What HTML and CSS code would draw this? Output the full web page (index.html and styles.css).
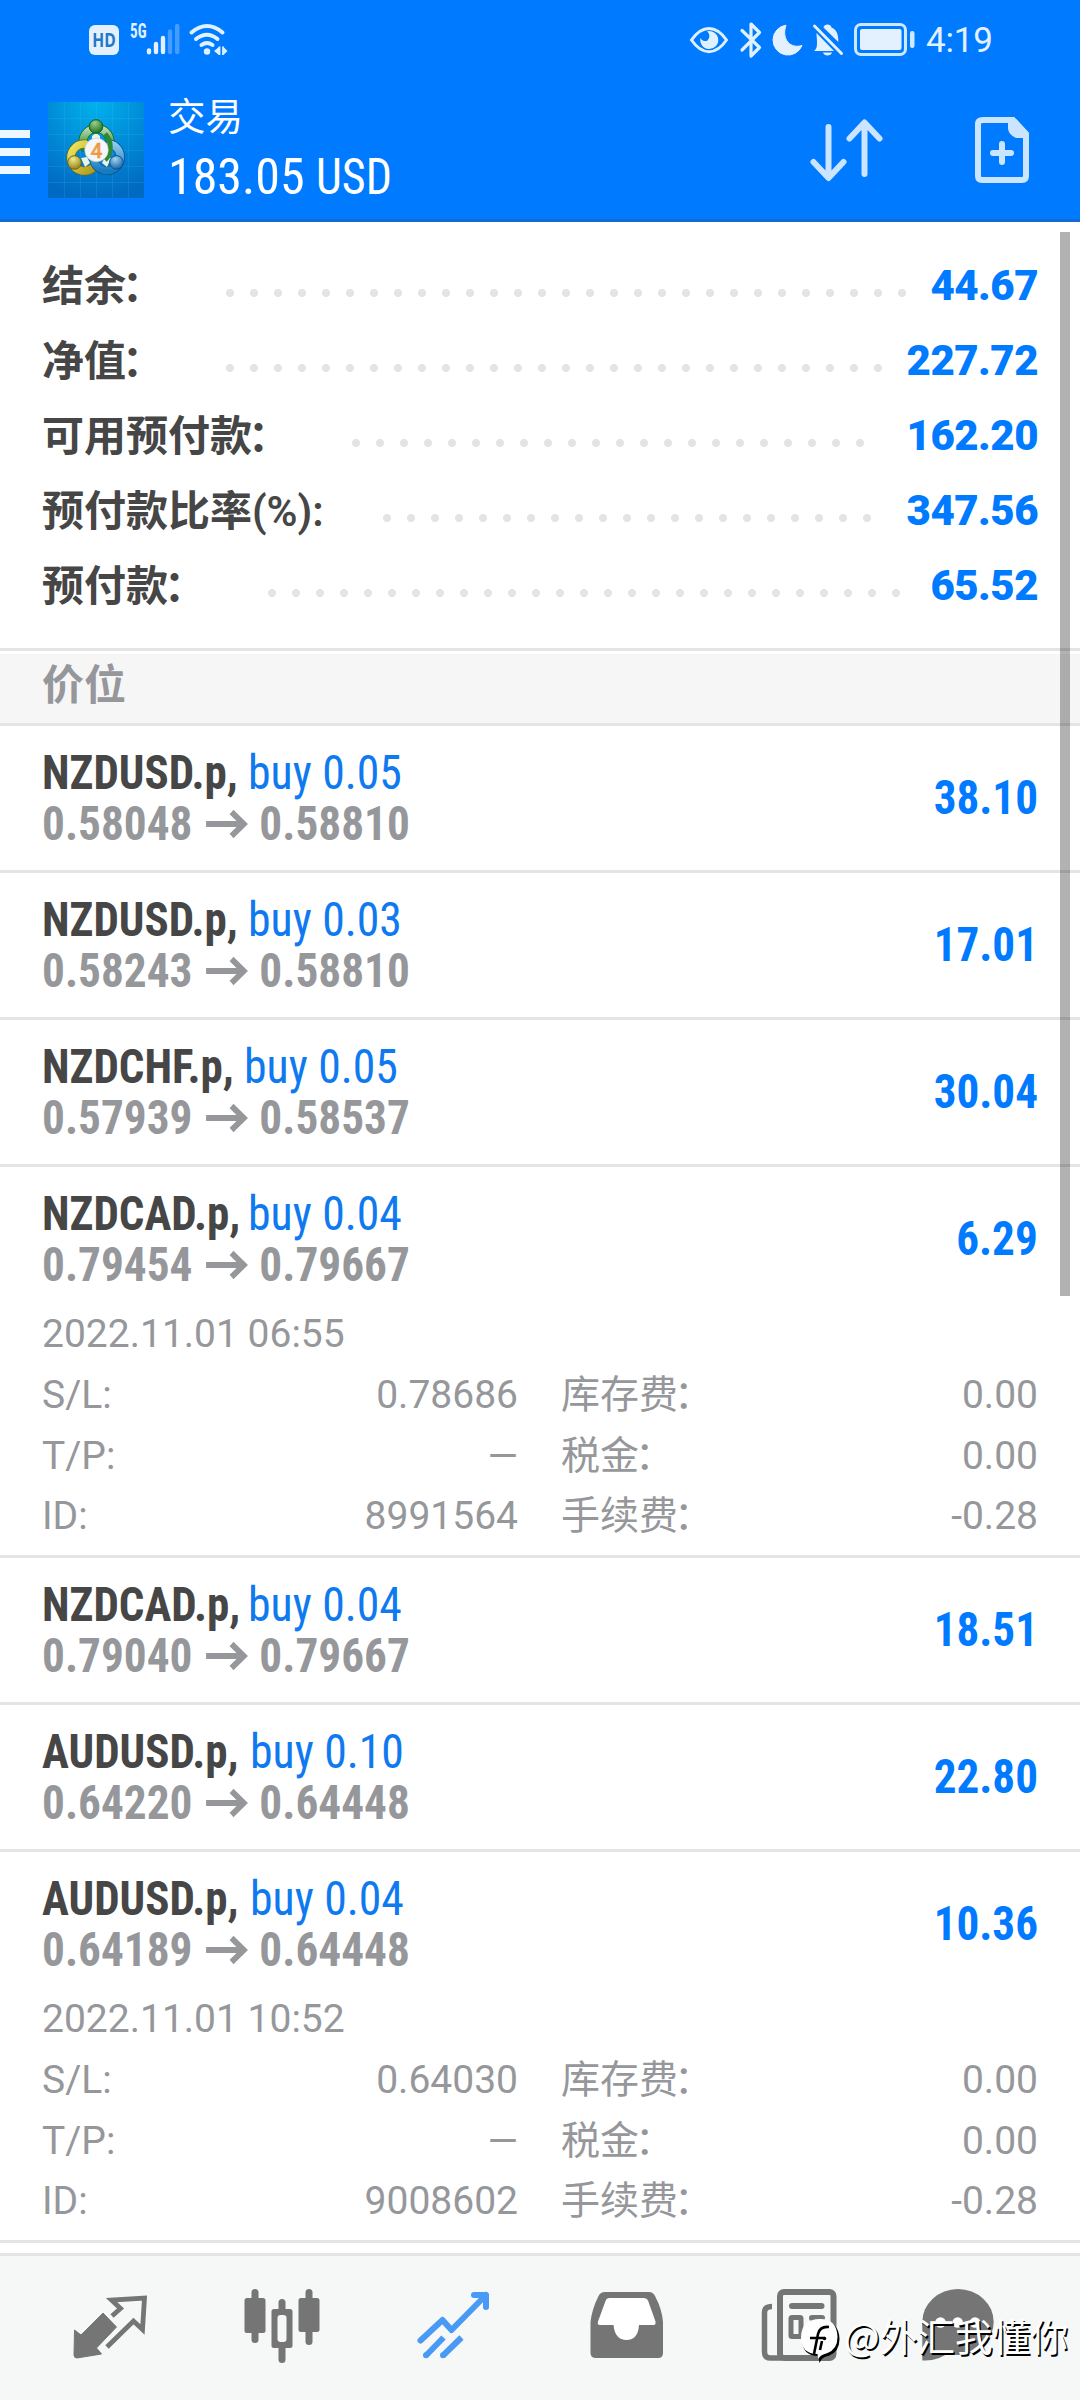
FILE: index.html
```html
<!DOCTYPE html>
<html lang="zh-CN">
<head>
<meta charset="utf-8">
<title>交易</title>
<link rel="stylesheet" href="styles.css">
</head>
<body>
<div class="screen">
  <header class="top">
    <div class="status">
      <svg class="st-hd" width="30" height="30" viewBox="0 0 30 30"><rect width="30" height="30" rx="6" fill="#e3f1ff"/><text x="15" y="22" text-anchor="middle" textLength="23.500" lengthAdjust="spacingAndGlyphs" class="hd-text">HD</text></svg>
      <svg class="st-signal" width="50" height="32" viewBox="0 0 50 32">
        <text x="0" y="14.600" textLength="16.500" lengthAdjust="spacingAndGlyphs" class="net-text">5G</text>
        <g stroke="#e3f1ff" stroke-width="4.400" stroke-linecap="round"><path d="M19 27.400v1.800M26 21v8M33 15v14"/><path d="M40 8.500v20.500M47.200 3v26" opacity=".3"/></g>
      </svg>
      <svg class="st-wifi" width="39" height="32" viewBox="0 0 39 32">
        <g fill="none" stroke="#e0f2ff" stroke-width="4" stroke-linecap="round"><path d="M2.500 9.500Q18 -3.500 33.500 9.500"/><path d="M7 16Q18 7.500 28.500 16"/><path d="M12.500 22Q18 18 23.500 22"/></g>
        <circle cx="18" cy="28.500" r="3.200" fill="#e0f2ff"/>
        <path d="M30.500 23.500v8.500M34 23.500v8.500" stroke="#e0f2ff" stroke-width="1.800"/><path d="M30 24v8l-5-4zM34.500 24v8l4-4z" fill="#e0f2ff"/>
      </svg>
      <div class="status-right">
        <svg width="38" height="34" viewBox="0 0 38 34"><path d="M1.500 17C12 1.500 26 1.500 36.500 17 26 32.500 12 32.500 1.500 17z" fill="none" stroke="#def1ff" stroke-width="3"/><path d="M17 8.300A9 9 0 1 1 10.500 15a5 5 0 0 0 7 2.500 6 6 0 0 0-.5-9.200z" fill="#def1ff"/></svg>
        <svg class="st-bt" width="22" height="36" viewBox="0 0 22 36"><path d="M2 8.500l17.500 17-8.500 8.500V2l8.500 8.500L2 28" fill="none" stroke="#def1ff" stroke-width="3.200" stroke-linejoin="round" stroke-linecap="round"/></svg>
        <svg class="st-moon" width="30" height="32" viewBox="0 0 30 32"><path d="M13 1.200A15 15 0 1 0 29 21.500C18 25 8 16 13 1.200z" fill="#e3f1ff" stroke="#e3f1ff" stroke-linejoin="round"/></svg>
        <svg class="st-bell" width="30" height="34" viewBox="0 0 30 34"><path d="M10.500 4.500C11 .5 18 .5 18.500 4.500 24 7 25.500 12 25.300 19z" fill="#e3f1ff"/><path d="M3.500 10l17.500 18H1c2.500-2 3-4 3-8 0-4-.5-7-.5-10zM10 29.500h9c-1 4-8 4-9 0z" fill="#e3f1ff"/><path d="M1.500 3L28.500 30.500" stroke="#e3f1ff" stroke-width="3" stroke-linecap="round"/></svg>
        <svg class="st-batt" width="61" height="34" viewBox="0 0 61 34"><rect x="1.500" y="1.500" width="50" height="30" rx="5.500" fill="none" stroke="#cde9ff" stroke-width="3"/><rect x="6" y="6" width="41.500" height="21" rx="2" fill="#e3f1ff"/><rect x="56" y="8" width="4.500" height="17" rx="2.200" fill="#cde9ff"/></svg>
        <span class="clock">4:19</span>
      </div>
    </div>
    <div class="appbar">
      <div class="burger"><i></i><i></i><i></i></div>
      <svg class="logo" width="96" height="96" viewBox="0 0 96 96">
        <defs>
          <radialGradient id="sky" cx=".5" cy="0" r="1"><stop offset="0" stop-color="#00b2ec"/><stop offset=".5" stop-color="#008cd8"/><stop offset="1" stop-color="#0069c2"/></radialGradient>
          <linearGradient id="gn" x2="0" y2="1"><stop stop-color="#b9dcae"/><stop offset="1" stop-color="#2a8a2e"/></linearGradient>
          <linearGradient id="yl" x2="1" y2="1"><stop stop-color="#eee660"/><stop offset="1" stop-color="#b09a1c"/></linearGradient>
          <linearGradient id="bl" x2="0" y2="1"><stop stop-color="#8cc9ee"/><stop offset="1" stop-color="#177bc0"/></linearGradient>
          <radialGradient id="gh" cx=".4" cy=".25" r=".8"><stop stop-color="#9ad08c"/><stop offset="1" stop-color="#146b1c"/></radialGradient>
          <radialGradient id="yh" cx=".4" cy=".25" r=".8"><stop stop-color="#f3eb8a"/><stop offset="1" stop-color="#8d7c17"/></radialGradient>
          <radialGradient id="bh" cx=".4" cy=".25" r=".8"><stop stop-color="#a2d4f3"/><stop offset="1" stop-color="#0d5da3"/></radialGradient>
        </defs>
        <rect width="96" height="96" fill="url(#sky)"/>
        <path d="M16.500 0v96M32.500 0v96M48.500 0v96M64.500 0v96M80.500 0v96M0 16.500h96M0 32.500h96M0 48.500h96M0 64.500h96M0 80.500h96" stroke="#5ac4f0" stroke-opacity=".16"/>
        <g fill="none" stroke-linecap="round">
          <path d="M36 45A13.500 13.500 0 1 1 61 45" stroke="#17622a" stroke-width="9"/><path d="M36 45A13.500 13.500 0 1 1 61 45" stroke="url(#gn)" stroke-width="7.500"/>
          <path d="M46 65A13.500 13.500 0 1 1 37 42" stroke="#6d6a1c" stroke-width="9"/><path d="M46 65A13.500 13.500 0 1 1 37 42" stroke="url(#yl)" stroke-width="7.500"/>
          <path d="M62 42A13.500 13.500 0 1 1 46 59" stroke="#0c4f88" stroke-width="9"/><path d="M62 42A13.500 13.500 0 1 1 46 59" stroke="url(#bl)" stroke-width="7.500"/>
        </g>
        <path d="M44 34l4-3 4 3v5h-8zM33 56l6-1 3 6-5 4zM63 56l-6-1-3 6 5 4z" fill="#e9f3e6"/>
        <path d="M57 32c7 7 7 19 0 26" fill="none" stroke="#2b8a33" stroke-width="5"/>
        <circle cx="48" cy="24.500" r="6.800" fill="url(#gh)" stroke="#115d1c"/>
        <circle cx="26.500" cy="60.500" r="6.800" fill="url(#yh)" stroke="#6f6512"/>
        <circle cx="68.500" cy="60.500" r="6.800" fill="url(#bh)" stroke="#0e518b"/>
        <circle cx="48.500" cy="48" r="11.800" fill="#f5f6f7" stroke="#bfc8c4" stroke-width=".6"/>
        <text x="48.500" y="55.500" text-anchor="middle" class="logo-num">4</text>
      </svg>
      <div class="heading"><h1>交易</h1><p>183.05 <span class="cur">USD</span></p></div>
      <svg class="sort" width="74" height="64" viewBox="0 0 74 64"><path d="M18.500 9v50M3.500 44l15 16 15-16M54.500 56V6M39.500 20.500l15-16 15 16" fill="none" stroke="#cbe4ff" stroke-width="6" stroke-linecap="round" stroke-linejoin="round"/></svg>
      <svg class="newdoc" width="54" height="66" viewBox="0 0 54 66"><path d="M8 3h30l13 14v42q0 4-4 4H7q-4 0-4-4V7q0-4 5-4z" fill="none" stroke="#cbe4ff" stroke-width="6"/><path d="M33 3v9q1 6 8 9h12V15L41 2z" fill="#cbe4ff"/><path d="M27 27v18M18 36h18" stroke="#cbe4ff" stroke-width="6" stroke-linecap="round"/></svg>
    </div>
  </header>

  <main class="content">
    <section class="summary">
      <div class="sum"><span>结余<i class="colon">：</i></span><div class="lead"><i style="--dots:29"></i></div><b>44.67</b></div>
      <div class="sum"><span>净值<i class="colon">：</i></span><div class="lead"><i style="--dots:28"></i></div><b>227.72</b></div>
      <div class="sum"><span>可用预付款<i class="colon">：</i></span><div class="lead"><i style="--dots:22"></i></div><b>162.20</b></div>
      <div class="sum"><span class="ratio">预付款比率<em>(%):</em></span><div class="lead"><i style="--dots:21"></i></div><b>347.56</b></div>
      <div class="sum"><span>预付款<i class="colon">：</i></span><div class="lead"><i style="--dots:27"></i></div><b>65.52</b></div>
    </section>
    <h2 class="section">价位</h2>

    <article class="pos"><div class="head"><div><p class="name"><b>NZDUSD.p,</b><span>buy 0.05</span></p><p class="price">0.58048<svg width="44" height="28" viewBox="0 0 44 28"><path d="M0 14h40M27 2l13 12-13 12"/></svg>0.58810</p></div><b class="gain">38.10</b></div></article>
    <article class="pos"><div class="head"><div><p class="name"><b>NZDUSD.p,</b><span>buy 0.03</span></p><p class="price">0.58243<svg width="44" height="28" viewBox="0 0 44 28"><path d="M0 14h40M27 2l13 12-13 12"/></svg>0.58810</p></div><b class="gain">17.01</b></div></article>
    <article class="pos"><div class="head"><div><p class="name"><b class="chf">NZDCHF.p,</b><span>buy 0.05</span></p><p class="price">0.57939<svg width="44" height="28" viewBox="0 0 44 28"><path d="M0 14h40M27 2l13 12-13 12"/></svg>0.58537</p></div><b class="gain">30.04</b></div></article>
    <article class="pos"><div class="head"><div><p class="name"><b class="cad">NZDCAD.p,</b><span>buy 0.04</span></p><p class="price">0.79454<svg width="44" height="28" viewBox="0 0 44 28"><path d="M0 14h40M27 2l13 12-13 12"/></svg>0.79667</p></div><b class="gain">6.29</b></div>
      <div class="detail">
        <p class="date">2022.11.01 06:55</p>
        <span>S/L:</span><span>0.78686</span><span>库存费<i class="colon">：</i></span><span>0.00</span>
        <span>T/P:</span><span>—</span><span>税金<i class="colon">：</i></span><span>0.00</span>
        <span>ID:</span><span>8991564</span><span>手续费<i class="colon">：</i></span><span>-0.28</span>
      </div></article>
    <article class="pos"><div class="head"><div><p class="name"><b class="cad">NZDCAD.p,</b><span>buy 0.04</span></p><p class="price">0.79040<svg width="44" height="28" viewBox="0 0 44 28"><path d="M0 14h40M27 2l13 12-13 12"/></svg>0.79667</p></div><b class="gain">18.51</b></div></article>
    <article class="pos"><div class="head"><div><p class="name"><b class="aud">AUDUSD.p,</b><span>buy 0.10</span></p><p class="price">0.64220<svg width="44" height="28" viewBox="0 0 44 28"><path d="M0 14h40M27 2l13 12-13 12"/></svg>0.64448</p></div><b class="gain">22.80</b></div></article>
    <article class="pos"><div class="head"><div><p class="name"><b class="aud">AUDUSD.p,</b><span>buy 0.04</span></p><p class="price">0.64189<svg width="44" height="28" viewBox="0 0 44 28"><path d="M0 14h40M27 2l13 12-13 12"/></svg>0.64448</p></div><b class="gain">10.36</b></div>
      <div class="detail">
        <p class="date">2022.11.01 10:52</p>
        <span>S/L:</span><span>0.64030</span><span>库存费<i class="colon">：</i></span><span>0.00</span>
        <span>T/P:</span><span>—</span><span>税金<i class="colon">：</i></span><span>0.00</span>
        <span>ID:</span><span>9008602</span><span>手续费<i class="colon">：</i></span><span>-0.28</span>
      </div></article>
    <div class="scrollbar"></div>
  </main>

  <nav class="tabs">
    <svg width="76" height="76" viewBox="72 2289 76 76"><path d="M74.500 2330l6.500 5 22-22 13.500 14-20 21 5 6-24.500 4q-3 0-3-3z" fill="#757575" stroke="#757575" stroke-linejoin="round"/><path d="M112 2316l8.500-7.500-9-8.500 33-2-2 31.500-9-8.500-26.500 26" fill="none" stroke="#757575" stroke-width="4.800"/></svg>
    <svg width="76" height="76" viewBox="243.500 2289 76 76"><g fill="#757575"><rect x="244" y="2298" width="21" height="35" rx="2.500"/><rect x="251" y="2289" width="7" height="54" rx="3.500"/><rect x="298" y="2298" width="21" height="34" rx="2.500"/><rect x="305" y="2289" width="7" height="56" rx="3.500"/><rect x="278" y="2299" width="7" height="64" rx="3.500"/><rect x="271" y="2309" width="21" height="39" rx="2.500"/></g><rect x="277" y="2315" width="9" height="27" rx="3" fill="#f6f7f7"/></svg>
    <svg width="76" height="76" viewBox="416 2289 76 76"><path d="M420.500 2340.500l22-20.500 9 10 34.500-35M474 2295h12v12" fill="none" stroke="#489af4" stroke-width="6" stroke-linecap="round" stroke-linejoin="round"/><path d="M426 2355.500l17.500-18M443 2355.500l18.500-18" stroke="#489af4" stroke-width="6"/><circle cx="426" cy="2355.300" r="3" fill="#489af4"/><circle cx="443" cy="2355.300" r="3" fill="#489af4"/></svg>
    <svg width="76" height="76" viewBox="589 2289 76 76"><path d="M605 2292h44q4 0 6 4 7 13 8 26v31q0 5-5 5h-62q-5.500 0-5.500-5v-31q1.500-13 8-26 2-4 6.500-4z" fill="#757575"/><path d="M609.500 2298h34.500q3 0 4 2.500l7.500 21q.5 3.500-2 3.500H639q-1 15-12.500 15t-13-15H600q-3 0-2-3.500l7.500-20.500q1-3 4-3z" fill="#fff"/></svg>
    <svg width="76" height="76" viewBox="762 2289 76 76"><rect x="781" y="2292" width="53.500" height="66" rx="4" fill="#f6f7f7" stroke="#757575" stroke-width="6"/><path d="M773 2306.500q-7.500 0-7.500 6v39.500q0 6 6 6h12" fill="none" stroke="#757575" stroke-width="5.500"/><path d="M793 2306h29.500M813 2318h10" stroke="#757575" stroke-width="6" stroke-linecap="round"/><rect x="792" y="2317.500" width="10" height="19" rx="1" fill="#f6f7f7" stroke="#757575" stroke-width="5"/></svg>
    <svg width="76" height="76" viewBox="920 2289 76 76"><ellipse cx="958" cy="2322" rx="35.700" ry="33" fill="#757575"/><path d="M922.300 2322v38.500q16 1 28-9z" fill="#757575"/><g fill="#fff"><circle cx="940.500" cy="2322.500" r="5.300"/><circle cx="957.700" cy="2322.500" r="5.300"/><circle cx="975" cy="2322.500" r="5.300"/></g></svg>
  </nav>

  <div class="mark">
    <svg width="42" height="48" viewBox="0 0 42 48"><path d="M20 3q18 0 18.500 18 0 13-11 17-7 1-9 7-1-5-1-7Q1 38 1 21 1.500 3 20 3z" fill="#000"/><path d="M19 1q17 0 17.500 18 0 12-10 16-8 2-9 6-1-3-1-5Q0 36 0 19 .5 1 19 1z" fill="#fff"/><path d="M28 9q-9-1-11 7l-4 20M9 20h15M21 23l-2 9" fill="none" stroke="#000" stroke-width="2.600"/><circle cx="23.500" cy="20.500" r="1.800"/></svg>
    <span>@外汇我懂你</span>
  </div>
</div>
</body>
</html>
```
FILE: styles.css
```css
* { box-sizing: border-box; }
body, h1, h2, p { margin: 0; }
body {
  width: 1080px;
  background: #fff;
  font-family: Roboto, "Noto Sans CJK SC", sans-serif;
}
.screen {
  position: relative;
  display: flex;
  flex-direction: column;
  height: 2400px;
  overflow: hidden;
}
svg { display: block; flex: none; overflow: visible; }

/* header */
.top {
  height: 222px;
  background: #007aff;
  border-bottom: 3px solid #126bd6;
  color: #fff;
}
.status {
  display: flex;
  align-items: center;
  height: 80px;
  padding: 0 89px 0 89px;
}
.st-signal { margin: -2px 0 0 11px; }
.st-wifi { margin: -2px 0 0 9px; }
.status-right { display: flex; align-items: center; margin-left: auto; }
.st-bt { margin-left: 12px; }
.st-moon { margin-left: 11px; }
.st-bell { margin-left: 10px; }
.st-batt { margin-left: 11px; }
.clock { margin-left: 11px; width: 65px; font-size: 35px; line-height: 35px; letter-spacing: -0.2px; color: #e3f1ff; }
.hd-text { font: 700 20px "Open Sans", sans-serif; fill: #2577c8; }
.net-text { font: 700 20px Roboto, sans-serif; font-stretch: 75%; fill: #e0f2ff; }
.logo-num { font: 500 21px Roboto, sans-serif; fill: #f3a04e; stroke: #e98b33; stroke-width: .4px; }

.appbar {
  display: flex;
  align-items: center;
  height: 139px;
  padding-right: 51px;
}
.burger { display: grid; gap: 10px; width: 30px; margin-top: 5px; }
.burger i { height: 8px; background: #edf7ff; }
.logo { margin-left: 18px; }
.heading { flex: 1; padding-left: 24px; margin-top: -7px; }
.heading h1 { font-size: 37.5px; font-weight: 400; line-height: 63px; }
.heading p { font-size: 50px; line-height: 57px; font-stretch: 75%; white-space: nowrap; }
.cur { display: inline-block; transform: scaleX(.92); transform-origin: 0 0; }
.sort { margin-right: 91px; }

/* account summary */
.colon { font-style: normal; margin: 0 4px 0 -4px; }
.content { position: relative; flex: 1; }
.summary { padding: 26px 42px 25px; }
.sum {
  display: flex;
  height: 75px;
  line-height: 75px;
  font-size: 42px;
  font-weight: 700;
  color: #464646;
}
.sum span { line-height: 78px; }
.sum em { font-style: normal; font-weight: 600; }
.sum b { color: #007aff; letter-spacing: -.5px; }
.lead { flex: 1; padding: 33px 0 0 50px; min-width: 0; }
.ratio { width: 283px; }
.lead i {
  display: block;
  width: calc(var(--dots) * 24px);
  height: 24px;
  background: radial-gradient(circle, #e4e4e4 3.6px, transparent 4.4px) 0 0 / 24px 24px;
}
.section {
  height: 78px;
  padding-left: 42px;
  border-top: 3px solid #e4e4e4;
  border-bottom: 3px solid #e4e4e4;
  background: linear-gradient(#fff 3px, #f6f6f6 3px);
  font-size: 42px;
  line-height: 69px;
  color: #96979b;
}

/* positions */
.pos { border-bottom: 3px solid #e4e4e4; }
.head {
  display: flex;
  justify-content: space-between;
  height: 144px;
  padding: 21px 42px;
  font-size: 48px;
  line-height: 51px;
  font-stretch: 75%;
  white-space: nowrap;
}
.name { display: flex; color: #464646; }
.name b { flex: none; margin-right: -6px; transform: scaleX(.937); transform-origin: 0 0; }
.name span { color: #0f7af0; transform: scaleX(.952); transform-origin: 0 0; }
.name b { width: 212px; }
.name .chf { width: 208px; }
.name .aud { width: 214px; }
.price { display: flex; align-items: center; width: max-content; font-weight: 700; color: #96979b; transform: scaleX(.943); transform-origin: 0 0; }
.price svg { margin: 0 13px 0 14px; fill: none; stroke: #96979b; stroke-width: 6px; }
.gain { align-self: center; margin-top: -2px; color: #007aff; transform: scaleX(.94); transform-origin: 100% 0; }
.detail {
  display: grid;
  grid-template-columns: 200px 276px 200px 1fr;
  margin-top: -7px;
  padding: 0 42px 8px;
  font-size: 39px;
  line-height: 60.75px;
  color: #96979b;
}
.date { grid-column: 1 / -1; }
.detail span:nth-of-type(even) { text-align: right; }
.detail span:nth-of-type(4n+3) { padding-left: 43px; white-space: nowrap; }
.scrollbar {
  position: absolute;
  top: 10px;
  left: 1060px;
  width: 10px;
  height: 1064px;
  background: rgba(0, 0, 0, .3);
}

/* bottom tabs */
.tabs {
  display: flex;
  gap: 96.5px;
  height: 147px;
  padding: 33px 0 0 72px;
  border-top: 3px solid #e4e4e4;
  background: #f6f7f7;
}
.tabs svg:first-child { margin-right: -1px; }
.tabs svg:last-child { margin-left: -14px; }

.mark {
  position: absolute;
  left: 801px;
  top: 2318px;
  display: flex;
  gap: 1px;
  font-size: 37.7px;
  line-height: 34px;
  font-weight: 400;
  color: #fff;
  text-shadow: 1.5px 1.5px 0 #000;
  font-family: "Noto Sans CJK SC", sans-serif;
  white-space: nowrap;
}
```
